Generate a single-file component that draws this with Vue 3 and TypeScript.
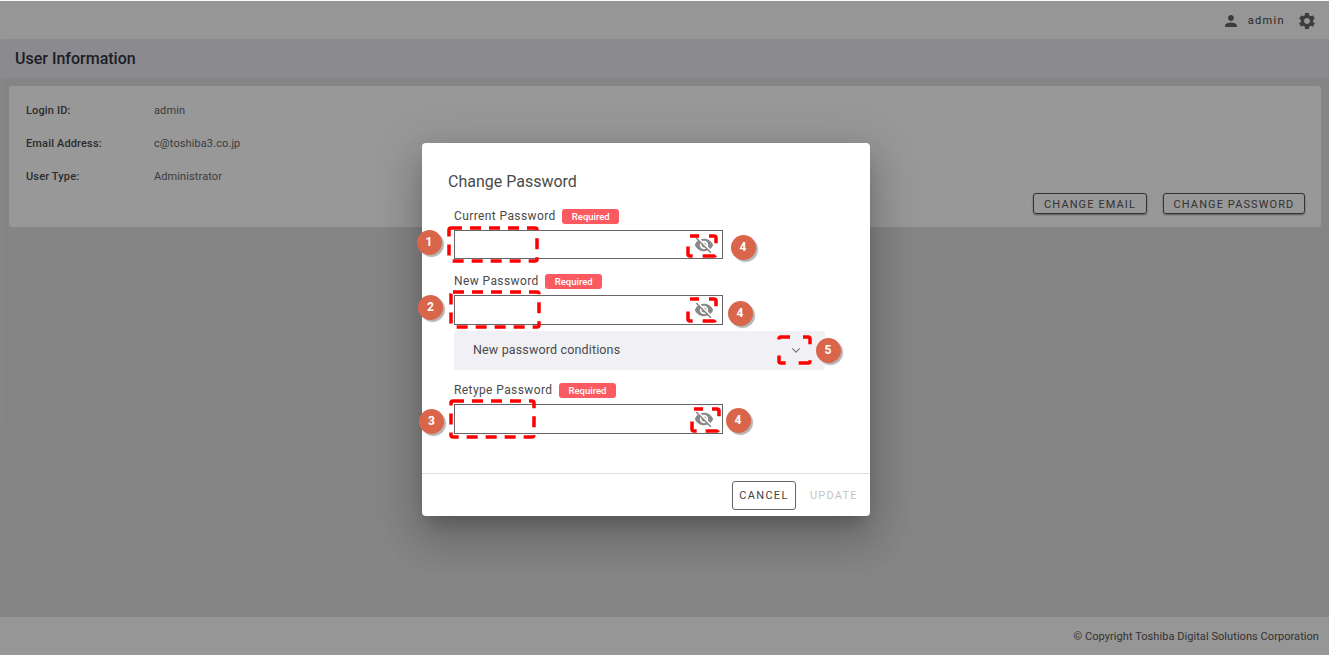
<script setup lang="ts">
interface Mark { x: number; y: number; w: number; h: number; dash?: string }
interface Badge { n: number; x: number; y: number }

// Annotation overlay, in page coordinates minus the dialog origin (422, 143)
const ox = 422
const oy = 143
const marks: Mark[] = [
  { x: 449, y: 228, w: 88, h: 33 },
  { x: 451, y: 292, w: 88, h: 35 },
  { x: 451, y: 401, w: 83, h: 36 },
  { x: 688, y: 236, w: 28, h: 20, dash: '9 10 13 12 13 10 13 12 6 0' },
  { x: 688, y: 299, w: 28, h: 22, dash: '9 10 13 14 13 10 13 14 6 0' },
  { x: 692, y: 409, w: 27, h: 22, dash: '9 9 13 14 13 9 13 14 6 0' },
  { x: 779, y: 337, w: 31, h: 26, dash: '9 13 13 16 13 13 13 16 6 0' }
]
const badges: Badge[] = [
  { n: 1, x: 429, y: 242 },
  { n: 2, x: 430.5, y: 307 },
  { n: 3, x: 431.5, y: 421 },
  { n: 4, x: 743, y: 247 },
  { n: 4, x: 740, y: 313 },
  { n: 4, x: 738, y: 420 },
  { n: 5, x: 828, y: 350 }
]
const info = [
  { k: 'Login ID:', v: 'admin' },
  { k: 'Email Address:', v: 'c@toshiba3.co.jp' },
  { k: 'User Type:', v: 'Administrator' }
]
const eyeOff = 'M12 7c2.76 0 5 2.24 5 5 0 .65-.13 1.26-.36 1.83l2.92 2.92c1.51-1.26 2.7-2.89 3.43-4.75-1.73-4.39-6-7.5-11-7.5-1.4 0-2.74.25-3.98.7l2.16 2.16C10.74 7.13 11.35 7 12 7zM2 4.27l2.28 2.28.46.46C3.08 8.3 1.78 10.02 1 12c1.73 4.39 6 7.5 11 7.5 1.55 0 3.03-.3 4.38-.84l.42.42L19.73 22 21 20.73 3.27 3 2 4.27zM7.53 9.8l1.55 1.55c-.05.21-.08.43-.08.65 0 1.66 1.34 3 3 3 .22 0 .44-.03.65-.08l1.55 1.55c-.67.33-1.41.53-2.2.53-2.76 0-5-2.24-5-5 0-.79.2-1.53.53-2.2zm4.31-.78l3.15 3.15.02-.16c0-1.66-1.34-3-3-3l-.17.01z'
</script>

<template>
  <div class="page">
    <header class="top">
      <svg class="ico-user" viewBox="0 0 24 24"><path d="M12 12c2.21 0 4-1.79 4-4s-1.79-4-4-4-4 1.79-4 4 1.79 4 4 4zm0 2c-2.67 0-8 1.34-8 4v2h16v-2c0-2.66-5.33-4-8-4z" /></svg>
      <span class="uname">admin</span>
      <svg class="ico-gear" viewBox="0 0 24 24"><path d="M19.14 12.94c.04-.3.06-.61.06-.94 0-.32-.02-.64-.07-.94l2.03-1.58c.18-.14.23-.41.12-.61l-1.92-3.32c-.12-.22-.37-.29-.59-.22l-2.39.96c-.5-.38-1.03-.7-1.62-.94l-.36-2.54c-.04-.24-.24-.41-.48-.41h-3.84c-.24 0-.43.17-.47.41l-.36 2.54c-.59.24-1.13.57-1.62.94l-2.39-.96c-.22-.08-.47 0-.59.22L2.74 8.87c-.12.21-.08.47.12.61l2.03 1.58c-.05.3-.09.63-.09.94s.02.64.07.94l-2.03 1.58c-.18.14-.23.41-.12.61l1.92 3.32c.12.22.37.29.59.22l2.39-.96c.5.38 1.03.7 1.62.94l.36 2.54c.05.24.24.41.48.41h3.84c.24 0 .44-.17.47-.41l.36-2.54c.59-.24 1.13-.56 1.62-.94l2.39.96c.22.08.47 0 .59-.22l1.92-3.32c.12-.22.07-.47-.12-.61l-2.01-1.58zM12 15.6c-1.98 0-3.6-1.62-3.6-3.6s1.62-3.6 3.6-3.6 3.6 1.62 3.6 3.6-1.62 3.6-3.6 3.6z" /></svg>
    </header>
    <div class="titlebar"><h1>User Information</h1></div>
    <main class="main">
      <section class="card">
        <dl class="rows">
          <div v-for="r in info" :key="r.k" class="row">
            <dt>{{ r.k }}</dt>
            <dd>{{ r.v }}</dd>
          </div>
        </dl>
        <div class="card-actions">
          <button class="btn-out raised w1">CHANGE EMAIL</button>
          <button class="btn-out raised w2">CHANGE PASSWORD</button>
        </div>
      </section>
    </main>
    <footer class="foot">© Copyright Toshiba Digital Solutions Corporation</footer>

    <div class="rail"></div>
    <div class="scrim"></div>

    <div class="dialog">
      <div class="dialog-body">
        <h2>Change Password</h2>
        <div class="field f1">
          <div class="lab"><span>Current Password</span><em>Required</em></div>
          <div class="inp h28"><svg class="eye" viewBox="0 0 24 24"><path :d="eyeOff" /></svg></div>
        </div>
        <div class="field f2">
          <div class="lab"><span>New Password</span><em>Required</em></div>
          <div class="inp h29"><svg class="eye" viewBox="0 0 24 24"><path :d="eyeOff" /></svg></div>
        </div>
        <div class="cond">
          <span>New password conditions</span>
          <svg class="chev" viewBox="0 0 12 8"><path d="M1.5 1.5 6 6l4.5-4.5" /></svg>
        </div>
        <div class="field f3">
          <div class="lab"><span>Retype Password</span><em>Required</em></div>
          <div class="inp h29"><svg class="eye" viewBox="0 0 24 24"><path :d="eyeOff" /></svg></div>
        </div>
      </div>
      <div class="dialog-foot">
        <button class="btn-out cancel">CANCEL</button>
        <span class="update">UPDATE</span>
      </div>

      <svg class="marks" width="448" height="373">
        <rect
          v-for="(m, i) in marks"
          :key="i"
          :x="m.x - ox"
          :y="m.y - oy"
          :width="m.w"
          :height="m.h"
          :stroke-dasharray="m.dash || '11 8'"
          rx="2"
        />
      </svg>
      <span
        v-for="(b, i) in badges"
        :key="'b' + i"
        class="num"
        :style="{ left: b.x - ox - 12.5 + 'px', top: b.y - oy - 12.5 + 'px' }"
      >{{ b.n }}</span>
    </div>
  </div>
</template>

<style>
html, body { margin: 0; padding: 0; }
</style>

<style scoped>
.page {
  position: relative;
  width: 1329px;
  height: 655px;
  overflow: hidden;
  display: flex;
  flex-direction: column;
  font-family: Roboto, "Liberation Sans", sans-serif;
  background: #dedede;
  color: #333;
}
.top {
  height: 39px;
  box-sizing: border-box;
  flex: none;
  display: flex;
  align-items: center;
  justify-content: flex-end;
  padding: 2px 12px 0 0;
  background: #fafafa;
}
.ico-user { width: 18px; height: 18px; fill: #666; margin-right: 8px; }
.uname { font-size: 11px; letter-spacing: 1.35px; color: #444; margin-right: 12px; }
.ico-gear { width: 20px; height: 20px; fill: #666; }
.titlebar {
  flex: none;
  height: 39px;
  display: flex;
  align-items: center;
  padding-left: 15px;
  background: #e6e6ee;
}
.titlebar h1 { margin: 0; font-size: 16px; font-weight: 500; color: #333340; }
.main { flex: 1; padding: 8px 8px 0 9px; }
.card {
  position: relative;
  height: 141px;
  box-sizing: border-box;
  background: #fdfdfd;
  border-radius: 3px;
  padding: 8px 16px 0 17px;
}
.rows { margin: 0; }
.row { display: flex; height: 33px; align-items: center; font-size: 11px; letter-spacing: .15px; }
.row dt { width: 128px; font-weight: 500; color: #4a4a4a; }
.row dd { margin: 0; color: #666; letter-spacing: .1px; }
.card-actions {
  display: flex;
  justify-content: flex-end;
  gap: 16px;
}
.btn-out {
  font-family: inherit;
  flex: none;
  background: transparent;
  border: 1px solid #555;
  border-radius: 3px;
  color: #555;
  padding: 1px 0 0;
  font-size: 11px;
  letter-spacing: 1.1px;
}
.raised { height: 21px; box-shadow: 0 1px 2px rgba(0,0,0,.4); }
.w1 { width: 114px; }
.w2 { width: 142px; }
.foot {
  flex: none;
  height: 38px;
  display: flex;
  align-items: center;
  justify-content: flex-end;
  padding-right: 10px;
  font-size: 11px;
  letter-spacing: .06px;
  background: #fafafa;
  color: #555;
}
.rail { position: absolute; left: 0; top: 39px; width: 2px; height: 387px; background: rgba(255,255,255,.14); }
.scrim { position: absolute; inset: 1px 0 0 0; background: rgba(0,0,0,.4); }
.dialog {
  position: absolute;
  left: 422px;
  top: 143px;
  width: 448px;
  height: 373px;
  background: #fff;
  border-radius: 4px;
  display: flex;
  flex-direction: column;
  box-shadow: 0 11px 15px -7px rgba(0,0,0,.2), 0 24px 38px 3px rgba(0,0,0,.14), 0 9px 46px 8px rgba(0,0,0,.12);
}
.dialog-body { flex: 1; padding: 29px 45px 0 32px; }
.dialog-body h2 { margin: 0 0 0 -6px; font-size: 16px; line-height: 19px; font-weight: 400; color: #4a4a4a; }
.f1 { margin-top: 17px; }
.f2 { margin-top: 14px; }
.f3 { margin-top: 12px; }
.lab { display: flex; align-items: center; height: 16px; gap: 6.5px; margin-bottom: 6px; font-size: 12px; letter-spacing: .4px; color: #4a4a4a; }
.lab em {
  font-style: normal;
  font-size: 9.5px;
  font-weight: 500;
  letter-spacing: 0;
  background: #fa5a60;
  color: #fff;
  border-radius: 3px;
  width: 57px;
  height: 15px;
  line-height: 15px;
  text-align: center;
}
.inp {
  width: 269px;
  box-sizing: border-box;
  border: 1px solid #666;
  display: flex;
  align-items: center;
  justify-content: flex-end;
  padding-right: 8px;
}
.h28 { height: 29px; }
.h29 { height: 30px; }
.eye { width: 20px; height: 20px; fill: #888; }
.cond {
  width: 371px;
  height: 39px;
  margin-top: 6px;
  box-sizing: border-box;
  padding: 0 0 2px 19px;
  background: #f0f0f5;
  border-radius: 2px;
  display: flex;
  align-items: center;
  justify-content: space-between;
  font-size: 12.5px;
  letter-spacing: .15px;
  color: #4a4a4a;
}
.chev { width: 10px; height: 7px; margin: 2px 24px 0 0; fill: none; stroke: #777; stroke-width: 1.3; }
.dialog-foot {
  flex: none;
  height: 42px;
  border-top: 1px solid #ddd;
  display: flex;
  align-items: center;
  padding: 0 13px 0 310px;
  gap: 14px;
}
.cancel { width: 64px; height: 29px; border-color: #666; border-radius: 3px; background: #fff; color: #444; letter-spacing: 1.3px; padding: 0; }
.update { font-size: 11px; letter-spacing: 1.2px; color: #c4c4c4; }
.marks { position: absolute; left: 0; top: 0; overflow: visible; pointer-events: none; }
.marks rect { fill: none; stroke: #f00; stroke-width: 3.5; }
.num {
  position: absolute;
  width: 25px;
  height: 25px;
  border-radius: 50%;
  background: #d9654a;
  box-shadow: 2px 2px 1px #b5b5b5;
  color: #fff;
  font-size: 12px;
  font-weight: 700;
  text-align: center;
  line-height: 25px;
}
</style>
